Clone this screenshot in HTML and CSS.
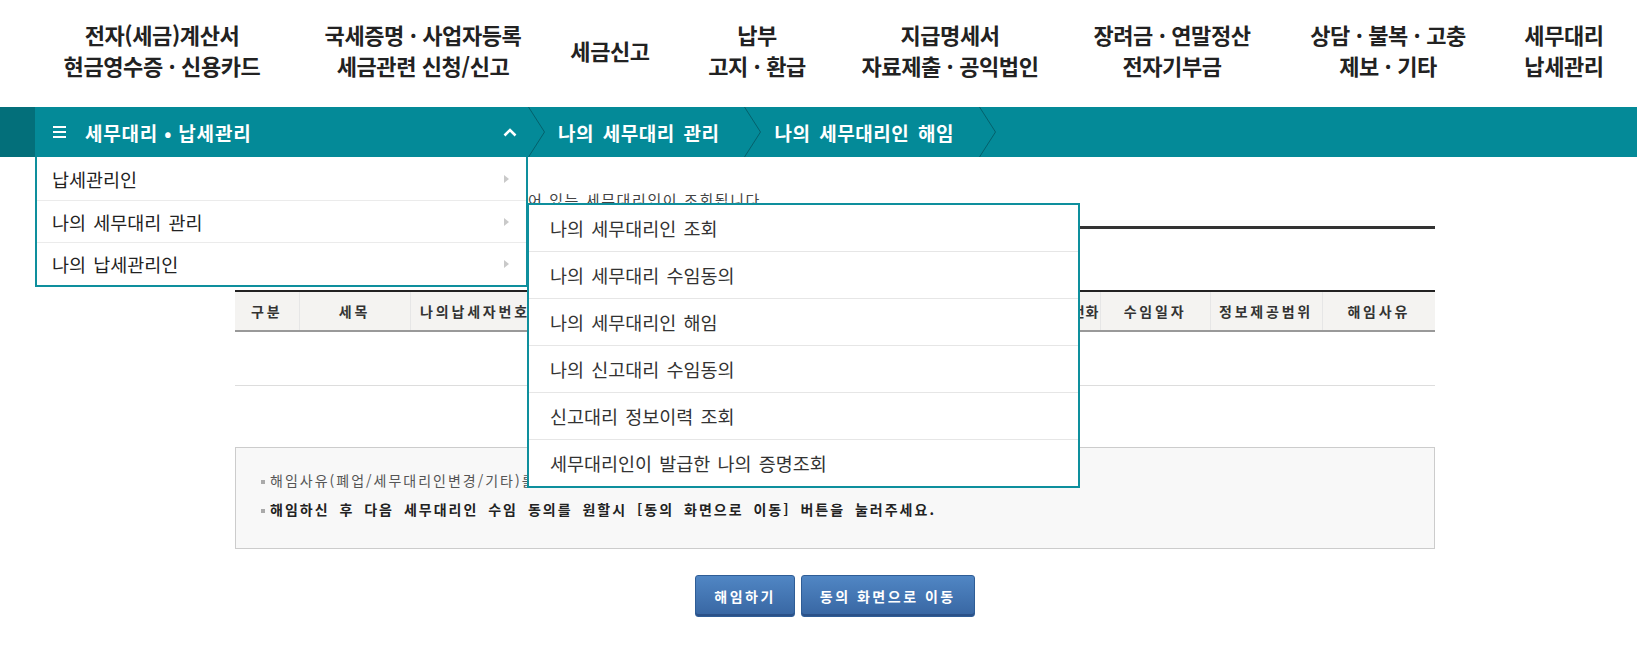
FILE: index.html
```html
<!DOCTYPE html>
<html lang="ko">
<head>
    <meta charset="UTF-8">
    <title>나의 세무대리인 해임</title>
    <link rel="stylesheet" href="styles.css">
</head>
<body>

    <!-- Top menu -->
    <ul class="gnb">
        <li><span>전자(세금)계산서<br>현금영수증 · 신용카드</span></li>
        <li><span>국세증명 · 사업자등록<br>세금관련 신청/신고</span></li>
        <li><span>세금신고</span></li>
        <li><span>납부<br>고지 · 환급</span></li>
        <li><span>지급명세서<br>자료제출 · 공익법인</span></li>
        <li><span>장려금 · 연말정산<br>전자기부금</span></li>
        <li><span>상담 · 불복 · 고충<br>제보 · 기타</span></li>
        <li><span>세무대리<br>납세관리</span></li>
    </ul>

    <!-- Location bar -->
    <div class="lnb">
        <div class="lnb-side"></div>
        <div class="menu">
            <svg class="burger" width="13" height="12" viewBox="0 0 13 12"><path d="M0 1h13M0 6h13M0 11h13" stroke="#fff" stroke-width="2"/></svg>
            <span class="menu-title">세무대리 • 납세관리</span>
            <svg class="caret" width="14" height="9" viewBox="0 0 14 9"><polyline points="1.5,7.5 7,2 12.5,7.5" fill="none" stroke="#fff" stroke-width="2.6"/></svg>

            <ul class="menu-panel">
                <li>납세관리인</li>
                <li>나의 세무대리 관리
                    <ul class="sub-panel">
                        <li>나의 세무대리인 조회</li>
                        <li>나의 세무대리 수임동의</li>
                        <li>나의 세무대리인 해임</li>
                        <li>나의 신고대리 수임동의</li>
                        <li>신고대리 정보이력 조회</li>
                        <li>세무대리인이 발급한 나의 증명조회</li>
                    </ul>
                </li>
                <li>나의 납세관리인</li>
            </ul>
        </div>
        <svg class="chev" width="17" height="50" viewBox="0 0 17 50"><polyline points="0.5,0 16.5,25 0.5,50" fill="none" stroke="#05606b" stroke-width="1"/></svg>
        <div class="crumb">나의 세무대리 관리</div>
        <svg class="chev" width="17" height="50" viewBox="0 0 17 50"><polyline points="0.5,0 16.5,25 0.5,50" fill="none" stroke="#05606b" stroke-width="1"/></svg>
        <div class="crumb">나의 세무대리인 해임</div>
        <svg class="chev" width="17" height="50" viewBox="0 0 17 50"><polyline points="0.5,0 16.5,25 0.5,50" fill="none" stroke="#05606b" stroke-width="1"/></svg>
    </div>

    <!-- Content -->
    <div class="content">
        <p class="desc">현재 나의 세무대리인으로 수임동의가 되어 있는 세무대리인이 조회됩니다.</p>
        <div class="rule"></div>

        <table class="list">
            <colgroup>
                <col class="c-64"><col class="c-111"><col class="c-130"><col class="c-140">
                <col class="c-150"><col class="c-130"><col class="c-140">
                <col class="c-110"><col class="c-112"><col class="c-113">
            </colgroup>
            <thead>
                <tr>
                    <th>구분</th>
                    <th>세목</th>
                    <th>나의납세자번호</th>
                    <th>세무대리인성명</th>
                    <th>사업자등록번호</th>
                    <th>관리번호</th>
                    <th class="th-tel">세무대리인 전화</th>
                    <th>수임일자</th>
                    <th>정보제공범위</th>
                    <th>해임사유</th>
                </tr>
            </thead>
            <tbody>
                <tr><td colspan="10"></td></tr>
            </tbody>
        </table>

        <ul class="notice">
            <li><span class="dot"></span>해임사유(폐업/세무대리인변경/기타)를 선택하신 후 [해임하기] 버튼을 누르시면 해임처리 됩니다.</li>
            <li class="strong"><span class="dot"></span>해임하신 후 다음 세무대리인 수임 동의를 원할시 [동의 화면으로 이동] 버튼을 눌러주세요.</li>
        </ul>

        <div class="btns">
            <button class="btn">해임하기</button>
            <button class="btn">동의 화면으로 이동</button>
        </div>
    </div>

</body>
</html>
```

FILE: styles.css
```css
/* Reset default styles */
* {
    margin: 0;
    padding: 0;
    box-sizing: border-box;
}

body {
    font-family: "Noto Sans CJK KR", "Noto Sans", sans-serif;
    color: #333;
    background: #fff;
}

ul {
    list-style: none;
}

/* Top menu - each box is centered on its menu title */
.gnb {
    height: 107px;
    display: flex;
    align-items: center;
    padding-bottom: 7px;
}

.gnb li {
    display: flex;
    justify-content: center;
    font-size: 22px;
    font-weight: 600;
    line-height: 31px;
    color: #222;
    text-align: center;
    white-space: nowrap;
    letter-spacing: -0.4px;
}

.gnb li:nth-child(1) { width: 324px; }
.gnb li:nth-child(2) { width: 198px; }
.gnb li:nth-child(3) { width: 176px; }
.gnb li:nth-child(4) { width: 118px; }
.gnb li:nth-child(5) { width: 268px; }
.gnb li:nth-child(6) { width: 176px; }
.gnb li:nth-child(7) { width: 256px; }
.gnb li:nth-child(8) { width: 96px; }

/* Location bar */
.lnb {
    height: 50px;
    background: #048a98;
    display: flex;
    position: relative;
    z-index: 10;
}

.lnb-side {
    width: 35px;
    background: #036f7a;
}

.menu {
    width: 493px;
    position: relative;
    display: flex;
    align-items: center;
    padding: 0 11px 0 18px;
    color: #fff;
}

.menu-title {
    margin-left: 19px;
    font-size: 19px;
    font-weight: bold;
    letter-spacing: 0.8px;
}

.caret {
    margin-left: auto;
}

.crumb {
    display: flex;
    align-items: center;
    padding: 0 25px 0 13px;
    color: #fff;
    font-size: 19px;
    font-weight: bold;
    letter-spacing: 0.5px;
    word-spacing: 3px;
}

/* Dropdown */
.menu-panel {
    position: absolute;
    top: 50px;
    left: 0;
    width: 493px;
    background: #fff;
    border: 2px solid #0e8f9d;
    border-top: 0;
}

.menu-panel > li {
    display: flex;
    align-items: center;
    height: 42px;
    padding: 0 17px 0 15px;
    font-size: 18.5px;
    color: #222;
    word-spacing: 2px;
    border-bottom: 1px solid #ebebeb;
}

.menu-panel > li:first-child {
    height: 44px;
}

.menu-panel > li:last-child {
    border-bottom: 0;
}

.menu-panel > li::after {
    content: "";
    margin-left: auto;
    border-left: 5px solid #c9c9c9;
    border-top: 4.5px solid transparent;
    border-bottom: 4.5px solid transparent;
}

.sub-panel {
    position: absolute;
    left: 490px;
    top: 46px;
    width: 553px;
    background: #fff;
    border: 2px solid #0e8f9d;
}

.sub-panel li {
    height: 47px;
    line-height: 46px;
    padding-left: 21px;
    font-size: 18.5px;
    color: #333;
    word-spacing: 2px;
    border-bottom: 1px solid #e6e6e6;
}

.sub-panel li:last-child {
    height: 46px;
    border-bottom: 0;
}

/* Main content */
.content {
    width: 1200px;
    margin-left: 235px;
}

.desc {
    margin-top: 33px;
    padding-left: 8px;
    font-size: 15px;
    line-height: 20px;
    letter-spacing: 1.6px;
    color: #444;
}

.rule {
    margin-top: 16px;
    border-top: 3px solid #333;
}

.list {
    width: 100%;
    margin-top: 61px;
    border-collapse: collapse;
    table-layout: fixed;
    border-top: 2px solid #222;
}

.c-64 { width: 64px; }
.c-110 { width: 110px; }
.c-111 { width: 111px; }
.c-112 { width: 112px; }
.c-113 { width: 113px; }
.c-130 { width: 130px; }
.c-140 { width: 140px; }
.c-150 { width: 150px; }

.list th {
    height: 40px;
    background: #f4f3f1;
    font-size: 14px;
    font-weight: bold;
    letter-spacing: 2.8px;
    color: #333;
    white-space: nowrap;
    overflow: hidden;
    border-left: 1px solid #e6e6e6;
    border-bottom: 2px solid #999;
}

.list th:first-child {
    border-left: 0;
}

.list th.th-tel {
    padding-right: 0;
    text-align: right;
    letter-spacing: 1px;
}

.list td {
    height: 54px;
    border-bottom: 1px solid #ddd;
}

/* Notice box */
.notice {
    height: 102px;
    margin-top: 61px;
    padding: 18px 0 0 25px;
    background: #f8f8f8;
    border: 1px solid #ccc;
}

.notice li {
    font-size: 14px;
    line-height: 29px;
    letter-spacing: 2px;
    color: #555;
    white-space: nowrap;
}

.notice li.strong {
    font-weight: bold;
    color: #222;
    letter-spacing: 2px;
    word-spacing: 4px;
}

.dot {
    display: inline-block;
    width: 4px;
    height: 4px;
    margin-right: 5px;
    vertical-align: middle;
    background: #aaa;
}

/* Buttons */
.btns {
    display: flex;
    justify-content: center;
    gap: 6px;
    margin-top: 26px;
}

.btn {
    height: 42px;
    padding: 0 18px;
    font-family: inherit;
    font-size: 14px;
    font-weight: bold;
    letter-spacing: 2.5px;
    color: #fff;
    background: linear-gradient(#5086c4, #3866a2);
    border: 1px solid #2f5d96;
    border-radius: 3px;
    box-shadow: inset 0 -2px 0 #2b5188;
    cursor: pointer;
}
```
